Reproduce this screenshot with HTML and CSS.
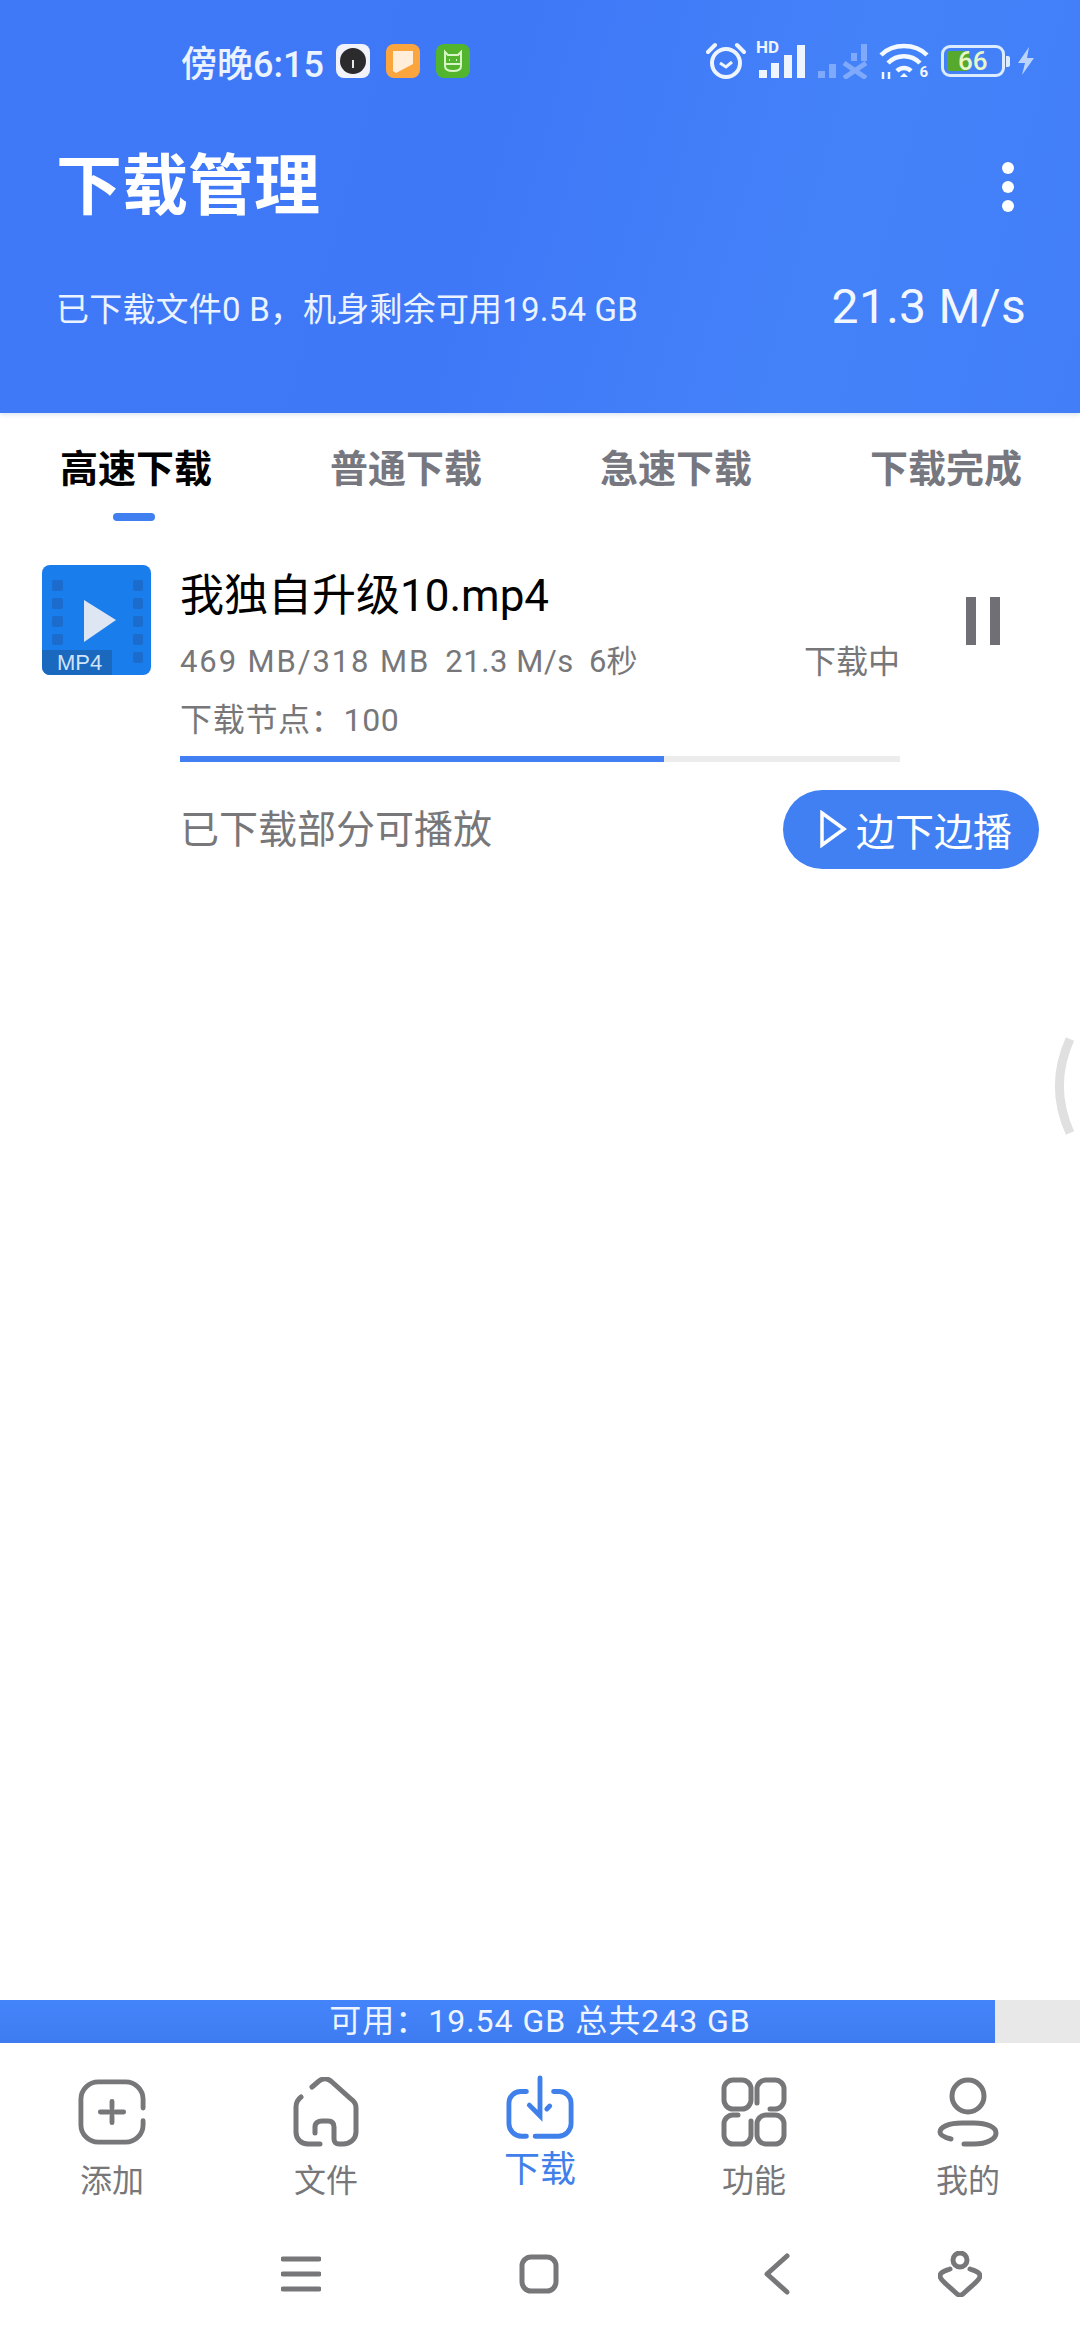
FILE: index.html
```html
<!DOCTYPE html>
<html lang="zh-CN">

<head>
    <meta charset="UTF-8">
    <meta name="viewport" content="width=device-width, initial-scale=1.0">
    <link rel="stylesheet" href="styles.css">
    <title>下载管理</title>
</head>

<body>
    <div class="page">
        <header class="top">
            <!-- Status bar -->
            <div class="status">
                <div class="status-left">
                    <span class="clock">傍晚6:15</span>
                    <span class="app app-dial"><i></i></span>
                    <span class="app app-orange">
                        <svg viewBox="0 0 34 34"><path d="M7 7H27V20L10 29L7 27Z" fill="#ffeeda"/></svg>
                    </span>
                    <span class="app app-green">
                        <svg viewBox="0 0 34 34" fill="none" stroke="#d9f5c8" stroke-width="2"><path d="M9 8L12 11H22L25 8V22C25 26 21 27 17 27C13 27 9 26 9 22Z"/><path d="M9 20H25"/><path d="M13 16H14M20 16H21"/></svg>
                    </span>
                </div>
                <div class="status-right">
                    <svg class="ic-alarm" viewBox="0 0 40 38" fill="none" stroke="#eef5ff"><circle cx="20" cy="21" r="14" stroke-width="4"/><path d="M14 21L20 25L26 20" stroke-width="3"/><path d="M2 10L9 3M38 10L31 3" stroke-width="4" stroke-linecap="round"/></svg>
                    <div class="signal">
                        <span class="hd">HD</span>
                        <svg class="ic-signal" viewBox="0 0 52 36" fill="#eef5ff">
                            <rect x="3" y="27" width="8" height="8"/>
                            <rect x="15" y="20" width="8" height="15"/>
                            <rect x="28" y="12" width="8" height="23"/>
                            <rect x="41" y="2" width="8" height="33"/>
                        </svg>
                    </div>
                    <svg class="ic-signal2" viewBox="0 0 50 36" fill="#eef5ff" opacity="0.35">
                        <rect x="0" y="28" width="7" height="7"/>
                        <rect x="11" y="21" width="7" height="14"/>
                        <rect x="33" y="10" width="6" height="8"/>
                        <rect x="43" y="1" width="6" height="17"/>
                        <path d="M26 20L48 35M48 20L26 35" stroke="#eef5ff" stroke-width="5"/>
                    </svg>
                    <div class="wifi">
                        <svg class="ic-wifi" viewBox="0 0 50 38" fill="none" stroke="#f4f8ff" stroke-width="4.5">
                            <path d="M2 13C14 1 36 1 48 13"/>
                            <path d="M9 21C18 12 32 12 41 21"/>
                            <path d="M18 29C22 25 28 25 32 29"/>
                            <path d="M25 31L29 35H21Z" fill="#f4f8ff" stroke="none"/>
                            <path d="M4 37V30M10 37V30" stroke-width="2.5"/>
                        </svg>
                        <span class="six">6</span>
                    </div>
                    <div class="battery">
                        <div class="battery-body">
                            <div class="battery-fill"></div>
                            <span class="battery-num">66</span>
                        </div>
                        <i class="battery-cap"></i>
                    </div>
                    <svg class="ic-bolt" viewBox="0 0 20 30" fill="#bcd4fb"><path d="M13 1L2 17H9L6 29L18 12H11Z"/></svg>
                </div>
            </div>

            <div class="title-row">
                <h1>下载管理</h1>
                <div class="more"><i></i><i></i><i></i></div>
            </div>
            <div class="summary">
                <span class="summary-text">已下载文件0 B，机身剩余可用19.54 GB</span>
                <span class="speed">21.3 M/s</span>
            </div>
        </header>

        <nav class="tabs">
            <a class="tab tab-active">高速下载</a>
            <a class="tab">普通下载</a>
            <a class="tab">急速下载</a>
            <a class="tab">下载完成</a>
        </nav>

        <main class="list">
            <div class="task">
                <svg class="file-icon" viewBox="0 0 109 110">
                    <rect width="109" height="110" rx="8" fill="#1a7dec"/>
                    <g fill="#1b6ccc">
                        <rect x="10" y="15" width="11" height="11" rx="2"/>
                        <rect x="10" y="33" width="11" height="11" rx="2"/>
                        <rect x="10" y="51" width="11" height="11" rx="2"/>
                        <rect x="10" y="69" width="11" height="11" rx="2"/>
                        <rect x="91" y="15" width="10" height="11" rx="2"/>
                        <rect x="91" y="33" width="10" height="11" rx="2"/>
                        <rect x="91" y="51" width="10" height="11" rx="2"/>
                        <rect x="91" y="69" width="10" height="11" rx="2"/>
                        <rect x="91" y="87" width="10" height="11" rx="2"/>
                    </g>
                    <path d="M0 85H70V110H8A8 8 0 0 1 0 102Z" fill="#1b68bf"/>
                    <path d="M42 35L74 55L42 77Z" fill="#dde6f2"/>
                    <text x="15" y="105" class="file-ext">MP4</text>
                </svg>
                <div class="task-body">
                    <div class="task-name">我独自升级10.mp4</div>
                    <div class="task-meta">
                        <span class="task-size">469 MB/318 MB</span>
                        <span class="task-rate">21.3 M/s</span>
                        <span>6秒</span>
                        <span class="task-state">下载中</span>
                    </div>
                    <div class="task-node">下载节点：100</div>
                    <div class="progress"><div class="progress-fill" style="width: 67.2%"></div></div>
                </div>
                <button class="pause" aria-label="暂停"><i></i><i></i></button>
            </div>
            <div class="task-foot">
                <span class="task-hint">已下载部分可播放</span>
                <button class="play-btn">
                    <svg viewBox="0 0 28 38" fill="none" stroke="#fff" stroke-width="3.5"><path d="M3 3L25 19L3 35Z"/></svg>
                    边下边播
                </button>
            </div>
        </main>

        <!-- Side handle -->
        <svg class="handle" viewBox="0 0 22 100" fill="none" stroke="#e0e0e0" stroke-width="9"><path d="M18 3C4 34 4 66 18 97"/></svg>

        <div class="storage">
            <div class="storage-fill" style="width: 92.1%"></div>
            <span class="storage-text">可用：19.54 GB 总共243 GB</span>
        </div>

        <nav class="bottom">
            <a class="nav-item">
                <svg class="nav-icon" viewBox="0 0 70 70" fill="none">
                    <path d="M67 31V22A18 18 0 0 0 49 4H21A18 18 0 0 0 3 22V48A18 18 0 0 0 21 66H49A18 18 0 0 0 67 48V44"/>
                    <path d="M23 35H47M35 24V31M35 39V46"/>
                </svg>
                <span>添加</span>
            </a>
            <a class="nav-item">
                <svg class="nav-icon" viewBox="0 0 66 70" fill="none">
                    <path d="M8 20C4 23 3 27 3 30V55C3 62 8 67 15 67H27"/>
                    <path d="M22 56V50C22 46 25 44 29 44H35C39 44 41 46 41 50V62C41 65 43 67 46 67H50C57 67 63 62 63 55V31C63 27 61 24 58 22L39 5C35 1 30 1 26 4L19 10"/>
                </svg>
                <span>文件</span>
            </a>
            <a class="nav-item nav-active">
                <svg class="nav-icon" viewBox="0 0 70 70" fill="none">
                    <path d="M21 17H15A12 12 0 0 0 3 29V50A13 13 0 0 0 16 63H21"/>
                    <path d="M30 63H54A13 13 0 0 0 67 50V29A12 12 0 0 0 55 17H49"/>
                    <path d="M35 3V42L24 31M42 35L45 32"/>
                </svg>
                <span>下载</span>
            </a>
            <a class="nav-item">
                <svg class="nav-icon" viewBox="0 0 66 70" fill="none">
                    <rect x="3" y="3" width="27" height="29" rx="9"/>
                    <rect x="36" y="38" width="27" height="29" rx="9"/>
                    <path d="M36 26V12A9 9 0 0 1 45 3H54A9 9 0 0 1 63 12V23A9 9 0 0 1 54 32H49"/>
                    <path d="M30 44V58A9 9 0 0 1 21 67H12A9 9 0 0 1 3 58V47A9 9 0 0 1 12 38H17"/>
                </svg>
                <span>功能</span>
            </a>
            <a class="nav-item">
                <svg class="nav-icon" viewBox="0 0 66 70" fill="none">
                    <circle cx="33" cy="19" r="16"/>
                    <path d="M16 62C8 60 5 58 5 55C5 50 14 46 27 46H39C52 46 61 50 61 56C61 62 52 67 39 67H29"/>
                </svg>
                <span>我的</span>
            </a>
        </nav>

        <!-- System navigation -->
        <div class="sysnav">
            <svg class="sys-menu" viewBox="0 0 40 38" fill="none"><path d="M2 4H38M2 19H38M2 34H38"/></svg>
            <svg class="sys-home" viewBox="0 0 40 40" fill="none"><rect x="3" y="3" width="34" height="34" rx="9"/></svg>
            <svg class="sys-back" viewBox="0 0 26 42" fill="none"><path d="M23 3L3 21L23 39"/></svg>
            <svg class="sys-assist" viewBox="0 0 44 46" fill="none"><circle cx="22" cy="9" r="7"/><path d="M12 18C7 20 2 21 2 25C2 28 5 30 8 33L18 42C21 45 23 45 26 42L36 33C39 30 42 28 42 25C42 21 37 20 32 18"/></svg>
        </div>
    </div>
</body>

</html>
```

FILE: styles.css
```css
* {
    box-sizing: border-box;
}

body {
    margin: 0;
    background: #fff;
    font-family: "Roboto", "Noto Sans CJK SC", sans-serif;
    color: #000;
}

.page {
    position: relative;
    display: flex;
    flex-direction: column;
    width: 1080px;
    height: 2340px;
    overflow: hidden;
}

/* Header */
.top {
    height: 413px;
    flex: none;
    padding: 39px 56px 0;
    color: #fff;
    background: linear-gradient(105deg, #4079f8 0%, #3f78f7 45%, #4482f9 75%, #417ef8 100%);
    box-shadow: 0 2px 4px rgba(120, 160, 200, 0.25);
}

.status {
    display: flex;
    justify-content: space-between;
    align-items: center;
    height: 44px;
    margin-right: -12px;
}

.status-left {
    display: flex;
    align-items: center;
    padding-left: 125px;
}

.clock {
    width: 155px;
    font-size: 36px;
    font-weight: 500;
    color: #eaf3ff;
    white-space: nowrap;
}

.app {
    display: block;
    width: 34px;
    height: 34px;
    margin-right: 16px;
    border-radius: 8px;
}

.app svg {
    display: block;
    width: 34px;
    height: 34px;
}

.app-dial {
    position: relative;
    display: flex;
    align-items: center;
    justify-content: center;
    background: #f1f2fa;
}

.app-dial i {
    width: 26px;
    height: 26px;
    border-radius: 50%;
    background: #2b2b2e;
}

.app-dial::after {
    content: "";
    position: absolute;
    left: 16px;
    top: 16px;
    width: 2px;
    height: 8px;
    background: #e8e8e8;
}

.app-orange {
    background: #fba53f;
}

.app-green {
    background: #53b52d;
}

.status-right {
    display: flex;
    align-items: center;
}

.ic-alarm {
    width: 40px;
    height: 38px;
    margin-left: -2px;
    margin-right: 10px;
}

.signal {
    position: relative;
    width: 52px;
    height: 36px;
    margin-right: 10px;
}

.ic-signal {
    display: block;
    width: 52px;
    height: 36px;
}

.hd {
    position: absolute;
    left: 0;
    top: -4px;
    font-size: 17px;
    line-height: 16px;
    font-weight: 700;
    color: #eef5ff;
}

.ic-signal2 {
    width: 50px;
    height: 36px;
    margin-right: 11px;
}

.wifi {
    position: relative;
    width: 50px;
    height: 38px;
    margin-right: 12px;
}

.ic-wifi {
    display: block;
    width: 50px;
    height: 38px;
}

.six {
    position: absolute;
    right: 1px;
    bottom: 0;
    font-size: 15px;
    line-height: 16px;
    font-weight: 700;
    color: #f4f8ff;
}

.battery {
    display: flex;
    align-items: center;
    margin-right: 6px;
}

.battery-body {
    position: relative;
    width: 64px;
    height: 32px;
    padding: 3px;
    border: 3px solid #dcebff;
    border-radius: 9px;
}

.battery-fill {
    width: 42%;
    height: 100%;
    background: #56a92c;
    border-radius: 3px;
}

.battery-num {
    position: absolute;
    left: 14px;
    top: -3px;
    font-size: 26px;
    line-height: 32px;
    font-weight: 500;
    color: #e8f7c9;
}

.battery-cap {
    width: 4px;
    height: 11px;
    margin-left: 1px;
    border-radius: 0 2px 2px 0;
    background: #dcebff;
}

.ic-bolt {
    width: 20px;
    height: 30px;
}

.title-row {
    display: flex;
    justify-content: space-between;
    align-items: center;
    margin-top: 59px;
}

h1 {
    margin: 0;
    font-size: 66px;
    line-height: 90px;
    font-weight: 700;
    color: #fff;
}

.more {
    display: flex;
    flex-direction: column;
    gap: 7px;
    margin-right: 10px;
}

.more i {
    width: 12px;
    height: 12px;
    border-radius: 50%;
    background: #fff;
}

.summary {
    display: flex;
    justify-content: space-between;
    align-items: center;
    margin-top: 46px;
    margin-right: -2px;
}

.summary-text {
    font-size: 33px;
    letter-spacing: 0.2px;
    color: #eaf3ff;
}

.speed {
    font-size: 48px;
    letter-spacing: 0.3px;
    color: #f2f7ff;
}

/* Tabs */
.tabs {
    display: flex;
    flex: none;
    justify-content: space-between;
    height: 114px;
    padding: 31px 58px 0 60px;
}

.tab {
    position: relative;
    height: 50px;
    font-size: 38px;
    line-height: 50px;
    font-weight: 700;
    color: #77777f;
}

.tab-active {
    color: #000;
}

.tab-active::after {
    content: "";
    position: absolute;
    left: 53px;
    top: 69px;
    width: 42px;
    height: 8px;
    border-radius: 4px;
    background: #3f7ff0;
}

/* Download list */
.list {
    flex: 1;
    padding: 38px 0 0;
}

.task {
    display: flex;
    padding: 0 0 0 42px;
}

.file-icon {
    flex: none;
    width: 109px;
    height: 110px;
}

.file-ext {
    font-family: "Liberation Sans", sans-serif;
    font-size: 22px;
    fill: #cfe3fb;
}

.task-body {
    width: 720px;
    margin-left: 29px;
}

.task-name {
    font-size: 44px;
    line-height: 60px;
    margin-top: 1px;
}

.task-meta {
    display: flex;
    gap: 15px;
    margin-top: 14px;
    font-size: 31px;
    line-height: 44px;
    color: #77777a;
}

.task-size {
    letter-spacing: 1.9px;
}

.task-rate {
    letter-spacing: 0.6px;
}

.task-state {
    margin-left: auto;
    font-size: 32px;
}

.task-node {
    margin-top: 14px;
    font-size: 32px;
    letter-spacing: 0.7px;
    line-height: 44px;
    color: #77777a;
}

.progress {
    height: 6px;
    margin-top: 14px;
    background: #ececec;
}

.progress-fill {
    height: 100%;
    background: #417ff2;
}

.pause {
    display: flex;
    gap: 14px;
    height: 48px;
    margin: 32px 0 0 66px;
    padding: 0;
    border: none;
    background: none;
}

.pause i {
    width: 10px;
    height: 48px;
    background: #6f6f75;
}

.task-foot {
    display: flex;
    align-items: center;
    justify-content: space-between;
    margin-top: 28px;
    padding: 0 41px 0 180px;
}

.task-hint {
    font-size: 39px;
    line-height: 56px;
    margin-top: 0;
    color: #77777a;
}

.play-btn {
    display: flex;
    align-items: center;
    gap: 9px;
    width: 256px;
    height: 79px;
    padding: 0 0 2px 36px;
    border: none;
    border-radius: 40px;
    background: #4080f3;
    color: #fff;
    font-family: inherit;
    font-size: 39px;
}

.play-btn svg {
    width: 28px;
    height: 38px;
}

.handle {
    position: absolute;
    left: 1052px;
    top: 1036px;
    width: 22px;
    height: 100px;
}

/* Storage bar */
.storage {
    position: relative;
    flex: none;
    height: 43px;
    background: #e8e8e8;
}

.storage-fill {
    height: 100%;
    background: linear-gradient(#4484fb, #3e7bf0);
}

.storage-text {
    position: absolute;
    left: 0;
    right: 0;
    top: 0;
    font-size: 32px;
    letter-spacing: 1px;
    line-height: 43px;
    text-align: center;
    color: #eef5ff;
}

/* Bottom navigation */
.bottom {
    display: flex;
    flex: none;
    height: 176px;
    padding: 34px 5px 0 5px;
}

.nav-item {
    display: flex;
    flex-direction: column;
    align-items: center;
    width: 214px;
    font-size: 32px;
    line-height: 44px;
    color: #77777a;
}

.nav-icon {
    width: 68px;
    height: 70px;
    margin-bottom: 12px;
    stroke: #77777a;
    stroke-width: 5;
    stroke-linecap: round;
}

.nav-active {
    color: #3f80ea;
    font-size: 36px;
}

.nav-active .nav-icon {
    margin-top: -3px;
    margin-bottom: 4px;
    stroke: #3f80ea;
}

/* System navigation */
.sysnav {
    display: flex;
    flex: none;
    align-items: center;
    height: 121px;
    padding: 0 0 11px 281px;
}

.sysnav svg {
    stroke: #77777a;
    stroke-width: 5;
    stroke-linecap: round;
    stroke-linejoin: round;
}

.sys-menu {
    width: 40px;
    height: 38px;
}

.sys-home {
    width: 40px;
    height: 40px;
    margin-left: 198px;
}

.sys-back {
    width: 26px;
    height: 42px;
    margin-left: 205px;
}

.sys-assist {
    width: 44px;
    height: 46px;
    margin-left: 148px;
    stroke-width: 4;
}
```
